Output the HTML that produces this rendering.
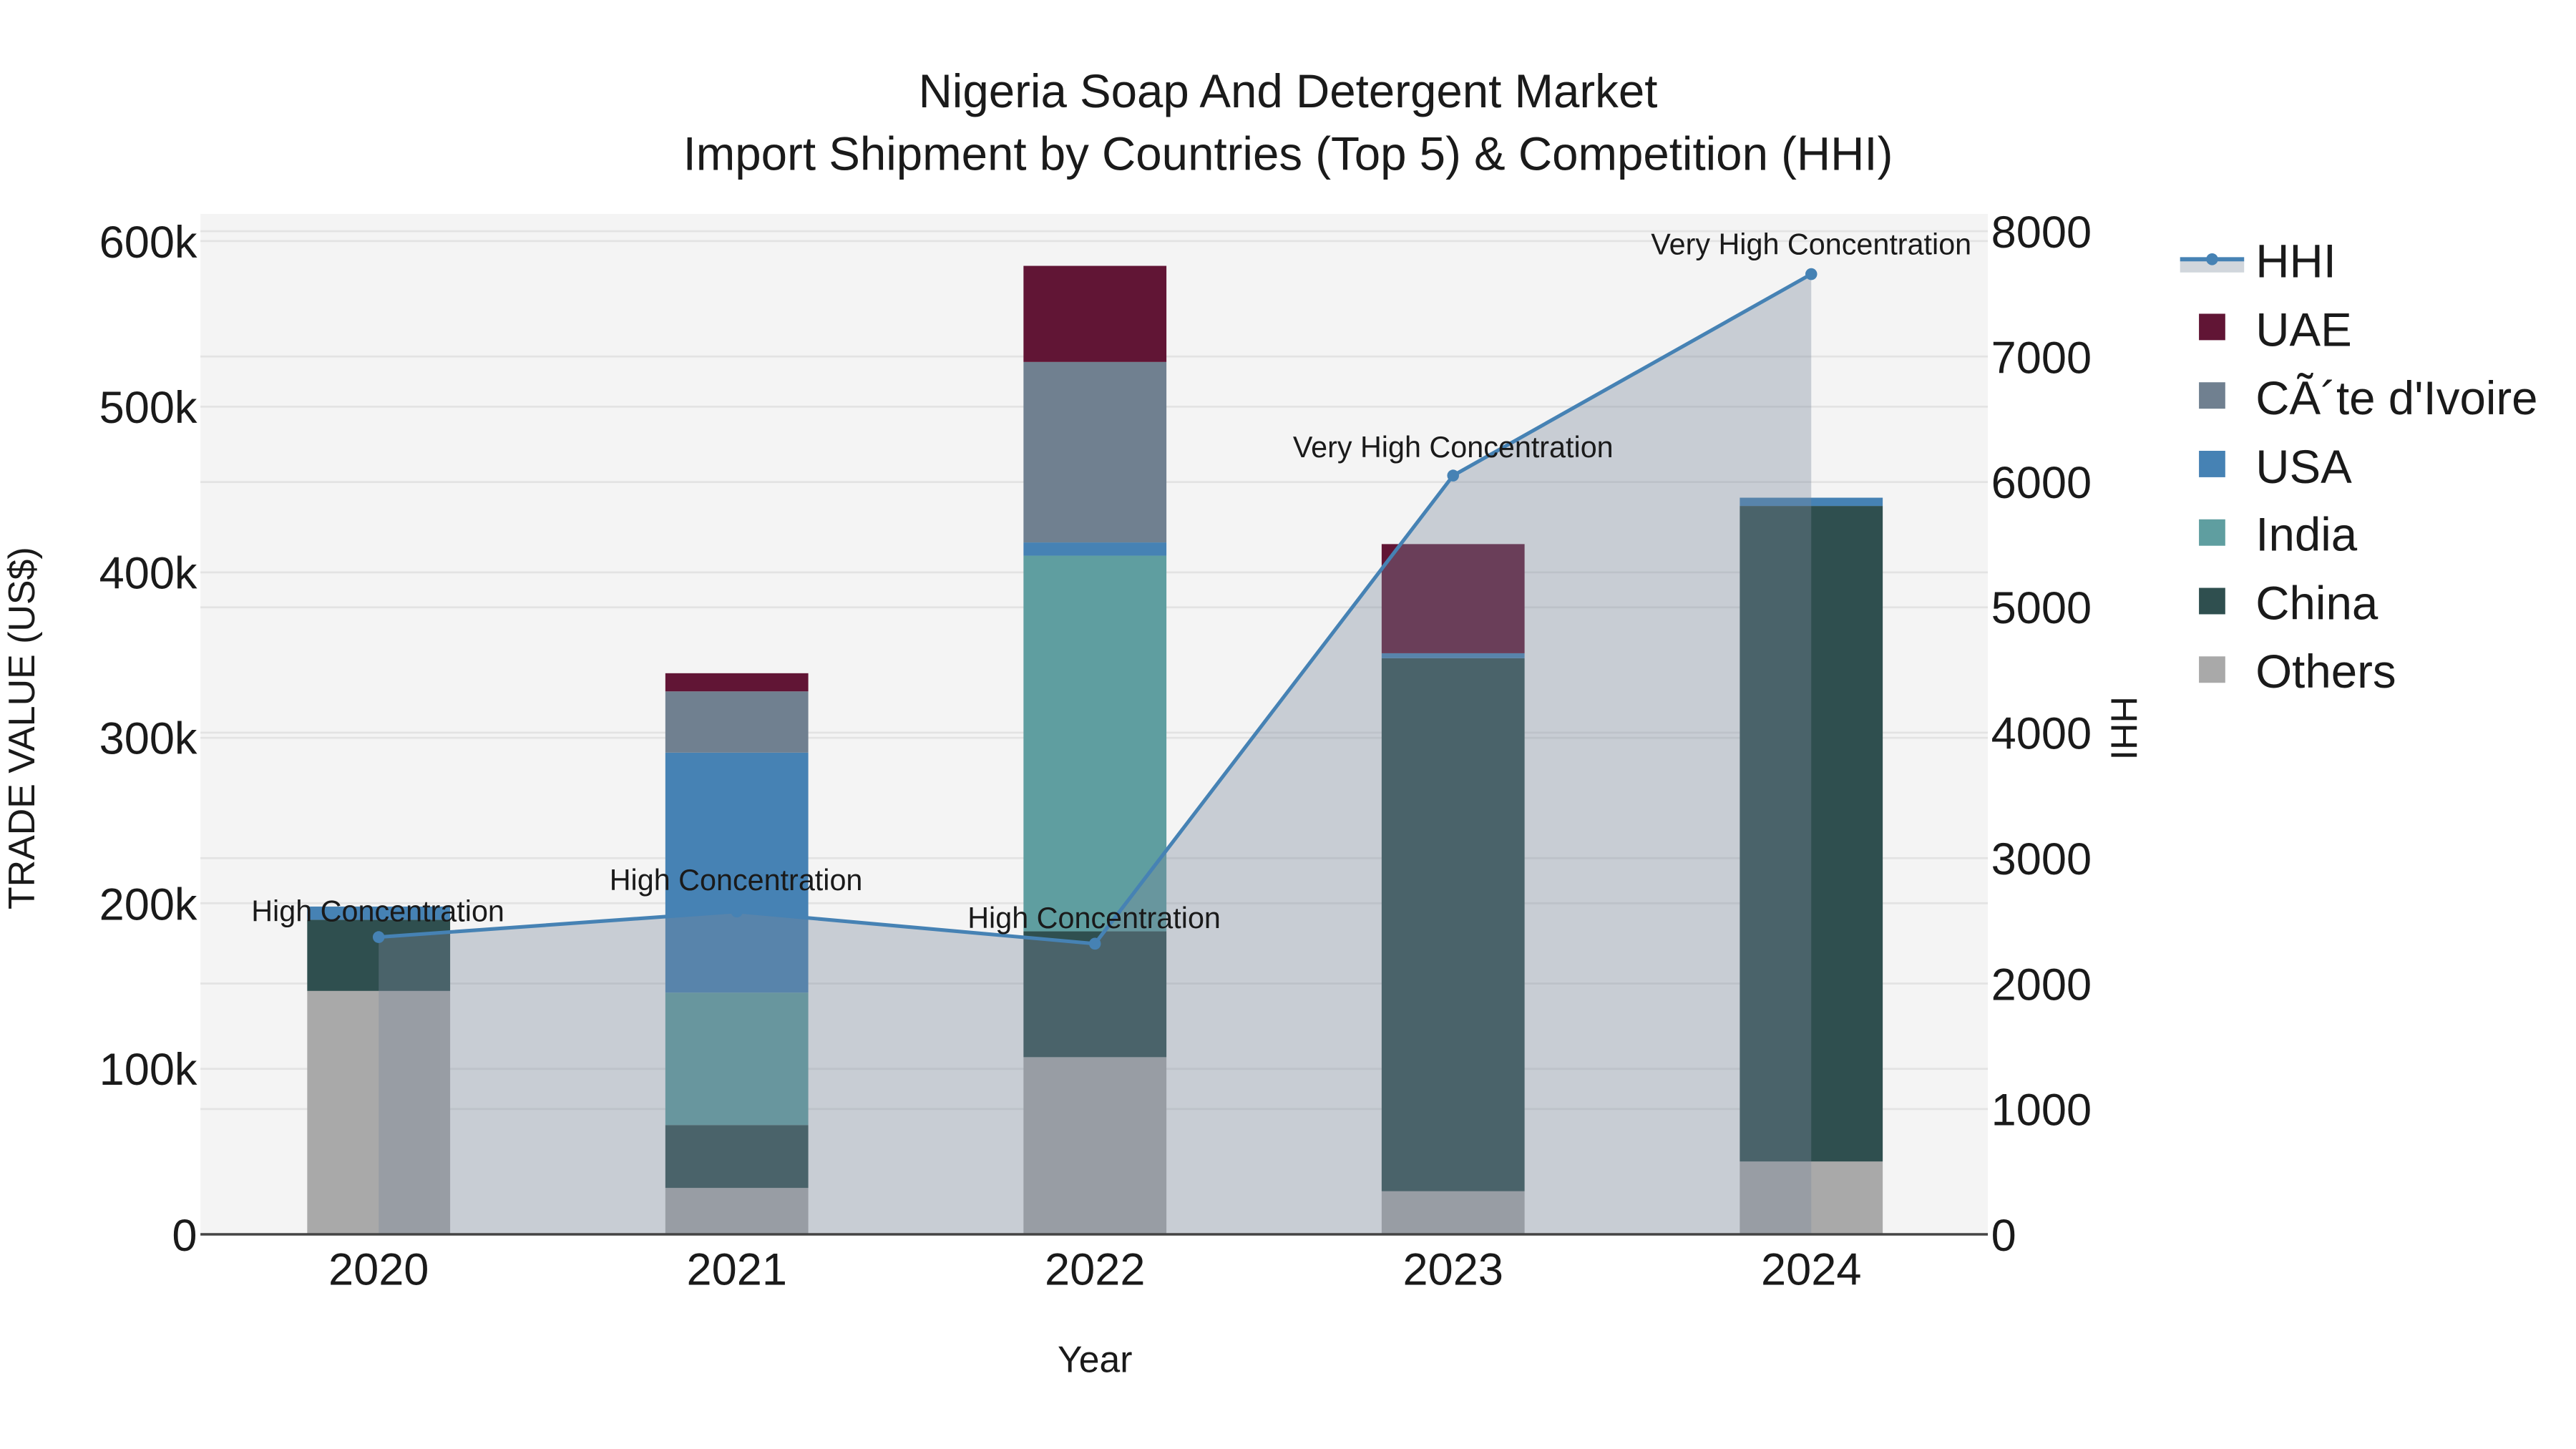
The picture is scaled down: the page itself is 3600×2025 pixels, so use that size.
<!DOCTYPE html>
<html><head><meta charset="utf-8"><style>
html,body{margin:0;padding:0;background:#fff;}
svg{display:block;}
text{font-family:"Liberation Sans",Arial,sans-serif;fill:#1a1a1a;}
</style></head><body>
<svg width="3600" height="2025" viewBox="0 0 1568 877.5" preserveAspectRatio="none" xmlns="http://www.w3.org/2000/svg">
<rect x="0" y="0" width="1568" height="877.5" fill="#fff"/>
<text x="784" y="65" font-size="28.5" text-anchor="middle">Nigeria Soap And Detergent Market</text>
<text x="784" y="103" font-size="28.5" text-anchor="middle">Import Shipment by Countries (Top 5) &amp; Competition (HHI)</text>
<rect x="122" y="129.6" width="1088" height="617.9" fill="#f4f4f4"/>
<g stroke="#e3e3e3" stroke-width="1.2">
<line x1="122" x2="1210" y1="647.3" y2="647.3"/><line x1="122" x2="1210" y1="547" y2="547"/><line x1="122" x2="1210" y1="446.8" y2="446.8"/><line x1="122" x2="1210" y1="346.6" y2="346.6"/><line x1="122" x2="1210" y1="246.3" y2="246.3"/><line x1="122" x2="1210" y1="146" y2="146"/>
<line x1="122" x2="1210" y1="671.6" y2="671.6"/><line x1="122" x2="1210" y1="595.6" y2="595.6"/><line x1="122" x2="1210" y1="519.7" y2="519.7"/><line x1="122" x2="1210" y1="443.7" y2="443.7"/><line x1="122" x2="1210" y1="367.8" y2="367.8"/><line x1="122" x2="1210" y1="291.9" y2="291.9"/><line x1="122" x2="1210" y1="215.9" y2="215.9"/><line x1="122" x2="1210" y1="140" y2="140"/>
</g>
<g>
<rect x="187" y="600.1" width="87" height="147.4" fill="#a9a9a9"/>
<rect x="187" y="557" width="87" height="43.1" fill="#2f4f4f"/>
<rect x="187" y="549" width="87" height="8" fill="#4682b4"/>

<rect x="405" y="719.4" width="87" height="28.1" fill="#a9a9a9"/>
<rect x="405" y="681.3" width="87" height="38.1" fill="#2f4f4f"/>
<rect x="405" y="601.1" width="87" height="80.2" fill="#5f9ea0"/>
<rect x="405" y="455.8" width="87" height="145.3" fill="#4682b4"/>
<rect x="405" y="418.7" width="87" height="37.1" fill="#708090"/>
<rect x="405" y="407.7" width="87" height="11" fill="#611535"/>

<rect x="623" y="640.2" width="87" height="107.3" fill="#a9a9a9"/>
<rect x="623" y="564" width="87" height="76.2" fill="#2f4f4f"/>
<rect x="623" y="336.5" width="87" height="227.5" fill="#5f9ea0"/>
<rect x="623" y="328.5" width="87" height="8" fill="#4682b4"/>
<rect x="623" y="219.2" width="87" height="109.3" fill="#708090"/>
<rect x="623" y="161" width="87" height="58.2" fill="#611535"/>

<rect x="841" y="721.4" width="87" height="26.1" fill="#a9a9a9"/>
<rect x="841" y="398.6" width="87" height="322.8" fill="#2f4f4f"/>
<rect x="841" y="395.6" width="87" height="3" fill="#4682b4"/>
<rect x="841" y="329.5" width="87" height="66.1" fill="#611535"/>

<rect x="1059" y="703.4" width="87" height="44.1" fill="#a9a9a9"/>
<rect x="1059" y="306.4" width="87" height="397" fill="#2f4f4f"/>
<rect x="1059" y="301.4" width="87" height="5" fill="#4682b4"/>
</g>
<polygon points="230.5,567.5 448.5,552 666.5,571.5 884.5,288 1102.5,166 1102.5,747.5 230.5,747.5" fill="rgb(122,135,155)" fill-opacity="0.36"/>
<polyline points="230.5,567.5 448.5,552 666.5,571.5 884.5,288 1102.5,166" fill="none" stroke="#4682b4" stroke-width="2.2"/>
<g fill="#4682b4"><circle cx="230.5" cy="567.5" r="3.6"/><circle cx="448.5" cy="552" r="3.6"/><circle cx="666.5" cy="571.5" r="3.6"/><circle cx="884.5" cy="288" r="3.6"/><circle cx="1102.5" cy="166" r="3.6"/></g>
<line x1="122" x2="1210" y1="747.5" y2="747.5" stroke="#444" stroke-width="1.5"/>
<g font-size="18" text-anchor="middle">
<text x="230" y="558">High Concentration</text>
<text x="448" y="539">High Concentration</text>
<text x="666" y="562">High Concentration</text>
<text x="884.5" y="277">Very High Concentration</text>
<text x="1102.5" y="154">Very High Concentration</text>
</g>
<g font-size="27.5" text-anchor="end">
<text x="120" y="757.5">0</text><text x="120" y="657">100k</text><text x="120" y="557">200k</text><text x="120" y="456.5">300k</text><text x="120" y="356.5">400k</text><text x="120" y="256">500k</text><text x="120" y="156">600k</text>
</g>
<g font-size="27.5">
<text x="1212" y="757.5">0</text><text x="1212" y="681.5">1000</text><text x="1212" y="605.5">2000</text><text x="1212" y="529.5">3000</text><text x="1212" y="453.5">4000</text><text x="1212" y="377.5">5000</text><text x="1212" y="301.5">6000</text><text x="1212" y="226">7000</text><text x="1212" y="150">8000</text>
</g>
<g font-size="27.5" text-anchor="middle">
<text x="230.5" y="778">2020</text><text x="448.5" y="778">2021</text><text x="666.5" y="778">2022</text><text x="884.5" y="778">2023</text><text x="1102.5" y="778">2024</text>
</g>
<text x="666.5" y="831" font-size="22.5" text-anchor="middle">Year</text>
<text transform="translate(21,441) rotate(-90)" font-size="22.5" text-anchor="middle">TRADE VALUE (US$)</text>
<text transform="translate(1285,441) rotate(90)" font-size="22.5" text-anchor="middle">HHI</text>
<rect x="1327" y="158" width="39" height="7" fill="#d1d6dc"/>
<line x1="1327" x2="1366" y1="157" y2="157" stroke="#4682b4" stroke-width="2.5"/>
<circle cx="1346.5" cy="157" r="3.6" fill="#4682b4"/>
<g font-size="28.5">
<text x="1373" y="168">HHI</text>
<text x="1373" y="209.5">UAE</text>
<text x="1373" y="251">CÃ´te d'Ivoire</text>
<text x="1373" y="292.5">USA</text>
<text x="1373" y="333.5">India</text>
<text x="1373" y="375">China</text>
<text x="1373" y="416.5">Others</text>
</g>
<rect x="1338.5" y="190" width="16" height="16" fill="#611535"/>
<rect x="1338.5" y="231.5" width="16" height="16" fill="#708090"/>
<rect x="1338.5" y="273" width="16" height="16" fill="#4682b4"/>
<rect x="1338.5" y="314.5" width="16" height="16" fill="#5f9ea0"/>
<rect x="1338.5" y="356" width="16" height="16" fill="#2f4f4f"/>
<rect x="1338.5" y="397.5" width="16" height="16" fill="#a9a9a9"/>
</svg>
</body></html>
